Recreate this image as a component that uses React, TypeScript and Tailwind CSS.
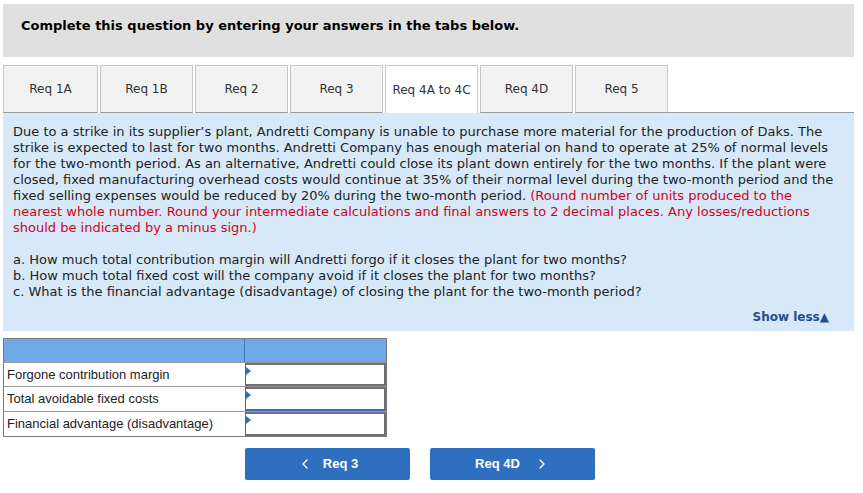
import { ChevronLeft, ChevronRight } from "lucide-react";

const tabs = ["Req 1A", "Req 1B", "Req 2", "Req 3", "Req 4A to 4C", "Req 4D", "Req 5"];

const rows = [
  { label: "Forgone contribution margin", focus: false, h: "h-[24px]" },
  { label: "Total avoidable fixed costs", focus: true, h: "h-[25px]" },
  { label: "Financial advantage (disadvantage)", focus: false, h: "h-[25px]" },
];

function InputCell({ focus }: { focus: boolean }) {
  return (
    <div
      className={
        "relative h-full border-2 border-l border-[#6f6f6f] border-l-[#2f6fbf] bg-white " +
        (focus ? "border-b-[#2f6fbf]" : "")
      }
    >
      <span className="absolute left-0 top-[2px] h-0 w-0 border-y-[4px] border-l-[5px] border-y-transparent border-l-[#2f6fbf]" />
    </div>
  );
}

export default function App() {
  return (
    <div className="w-[863px] h-[493px] bg-white font-['DejaVu_Sans',Verdana,sans-serif] text-[#222]">
      <div className="ml-[3px] mr-[9px] pt-[4px]">
        <div className="h-[53px] bg-[#e0e0e0] pl-[18px] pt-[14px] text-[13px] leading-4 font-bold text-black">
          Complete this question by entering your answers in the tabs below.
        </div>

        <div className="mt-[8px] flex items-end">
          {tabs.map((t, i) => {
            const active = t === "Req 4A to 4C";
            return (
              <div
                key={t}
                className={
                  "flex h-[48px] items-center justify-center border border-[#c6c6c6] text-[12px] text-[#333] " +
                  (i === 0 ? "w-[95px] " : "ml-[2px] w-[93px] ") +
                  (active
                    ? "border-[#a9a9a9] border-b-0 bg-white"
                    : "border-b-[#9a9a9a] bg-[#f2f2f2]")
                }
              >
                {t}
              </div>
            );
          })}
          <div className="h-px flex-1 bg-[#9a9a9a]" />
        </div>

        <div className="bg-[#d7e9f8] pl-[10px] pr-[10px] pt-[11px] pb-[6px] text-[13px] leading-4">
          <p>
            Due to a strike in its supplier’s plant, Andretti Company is unable to purchase more material for the
            production of Daks. The strike is expected to last for two months. Andretti Company has enough material on
            hand to operate at 25% of normal levels for the two-month period. As an alternative, Andretti could close its
            plant down entirely for the two months. If the plant were closed, fixed manufacturing overhead costs would
            continue at 35% of their normal level during the two-month period and the fixed selling expenses would be
            reduced by 20% during the two-month period.{" "}
            <span className="text-[#d0021b]">
              (Round number of units produced to the nearest whole number. Round your intermediate calculations and
              final answers to 2 decimal places. Any losses/reductions should be indicated by a minus sign.)
            </span>
          </p>
          <div className="mt-[16px]">
            <p>a. How much total contribution margin will Andretti forgo if it closes the plant for two months?</p>
            <p>b. How much total fixed cost will the company avoid if it closes the plant for two months?</p>
            <p>c. What is the financial advantage (disadvantage) of closing the plant for the two-month period?</p>
          </div>
          <div className="mt-[9px] mr-[15px] flex justify-end">
            <span className="font-bold text-[12px] text-[#1d4f91]">Show less▲</span>
          </div>
        </div>
      </div>

      <div className="ml-[3px] mt-[7px] w-[384px] border border-[#7a7a7a] font-['Liberation_Sans',Arial,sans-serif] text-[13px] text-[#222]">
        <div className="grid h-[23px] grid-cols-[241px_1fr] bg-[#6fa9e8]">
          <div className="border-r border-[#3f7bc4]" />
          <div />
        </div>
        {rows.map((r) => (
          <div key={r.label} className={"grid grid-cols-[241px_1fr] border-t border-[#9a9a9a] " + r.h}>
            <div className="flex items-center pl-[3px]">{r.label}</div>
            <InputCell focus={r.focus} />
          </div>
        ))}
      </div>

      <div className="ml-[245px] mt-[11px] flex gap-[20px] font-['Liberation_Sans',Arial,sans-serif] text-[13px] font-bold text-white">
        <div className="flex h-[32px] w-[165px] items-center justify-center gap-[10px] rounded-[2px] bg-[#2f6fbf]">
          <ChevronLeft className="h-4 w-4" strokeWidth={2} />
          <span>Req 3</span>
        </div>
        <div className="flex h-[32px] w-[165px] items-center justify-center gap-[14px] rounded-[2px] bg-[#2f6fbf]">
          <span>Req 4D</span>
          <ChevronRight className="h-4 w-4" strokeWidth={2} />
        </div>
      </div>
    </div>
  );
}
